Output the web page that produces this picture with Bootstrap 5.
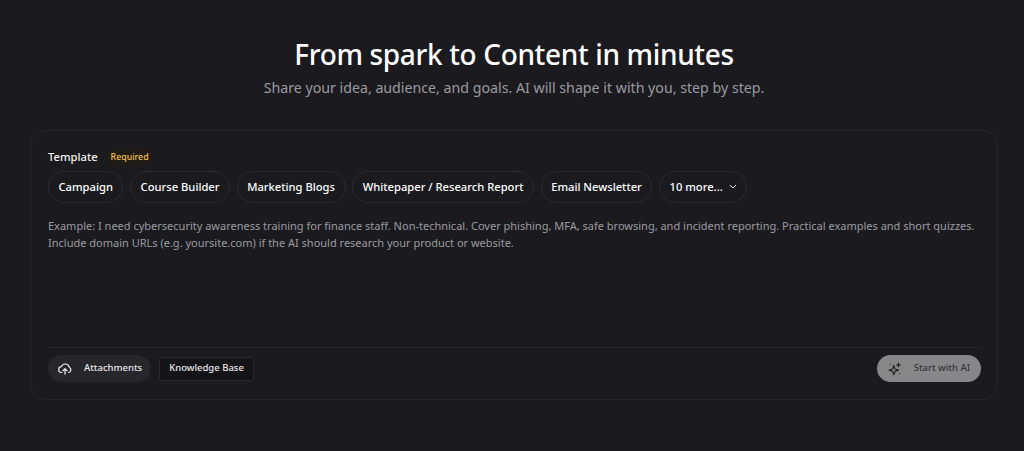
<!DOCTYPE html>
<html lang="en">
<head>
    <meta charset="UTF-8">
    <title>From spark to Content</title>
    <link href="https://cdn.jsdelivr.net/npm/bootstrap@5.3.3/dist/css/bootstrap.min.css" rel="stylesheet">
    <script src="https://cdn.jsdelivr.net/npm/bootstrap@5.3.3/dist/js/bootstrap.bundle.min.js"></script>
    <style>
        body {
            background: #1a1a1f;
            font-family: "Noto Sans", sans-serif;
            height: 451px;
            overflow: hidden;
        }

        .page-wrap {
            padding: 36px 26px 0 30px;
        }

        .hero-title {
            font-size: 28px;
            line-height: 36px;
            font-weight: 500;
            letter-spacing: -.35px;
            color: #fff;
            margin: 0 0 4px;
        }

        .hero-sub {
            font-size: 14.2px;
            line-height: 24px;
            color: #9a9aa0;
            margin: 0 0 30px;
        }

        .prompt-box {
            height: 270px;
            border: 1px solid #26262b;
            border-radius: 16px;
            padding: 17px 16px 17px 17px;
        }

        .field-label {
            font-size: 11.2px;
            line-height: 18px;
            font-weight: 500;
            color: #f2f2f2;
        }

        .required-tag {
            font-size: 8.8px;
            line-height: 14px;
            font-weight: 500;
            color: #f0c050;
            background: #211b16;
            border-radius: 8px;
            padding: 1px 4px;
            margin-left: 9px;
        }

        .chip-row {
            margin-top: 5px;
            gap: 6.7px;
        }

        .chip-btn {
            height: 32px;
            border: 1px solid #2a2a2f;
            border-radius: 16px;
            padding: 0 9.5px;
            font-size: 11.2px;
            font-weight: 500;
            color: #fff;
            background: transparent;
        }

        .chip-more {
            gap: 6px;
        }

        .prompt-text {
            font-size: 11px;
            line-height: 17px;
            color: #9a9aa0;
            margin: 14px 0 0;
            height: 130px;
        }

        .tool-bar {
            border-top: 1px solid #26262b;
            padding-top: 7px;
        }

        .attach-btn {
            height: 27px;
            border: 0;
            border-radius: 14px;
            background: #26262b;
            color: #e8e8e8;
            font-size: 9.5px;
            font-weight: 500;
            padding: 0 9px 0 10px;
        }

        .kb-btn {
            height: 24px;
            border: 1px solid #2a2a2f;
            border-radius: 2px;
            background: #141418;
            color: #e8e8e8;
            font-size: 9.5px;
            font-weight: 500;
            padding: 0 9px;
        }

        .start-btn {
            height: 27px;
            border: 0;
            border-radius: 14px;
            background: #87878a;
            color: #333336;
            font-size: 9.5px;
            font-weight: 500;
            padding: 0 11px;
        }
    </style>
</head>
<body>

<div class="page-wrap">
    <div class="text-center">
        <h1 class="hero-title">From spark to Content in minutes</h1>
        <p class="hero-sub">Share your idea, audience, and goals. AI will shape it with you, step by step.</p>
    </div>

    <div class="prompt-box">
        <div class="d-flex align-items-center">
            <span class="field-label">Template</span>
            <span class="required-tag">Required</span>
        </div>
        <div class="chip-row d-flex">
            <button type="button" class="chip-btn">Campaign</button>
            <button type="button" class="chip-btn">Course Builder</button>
            <button type="button" class="chip-btn">Marketing Blogs</button>
            <button type="button" class="chip-btn">Whitepaper / Research Report</button>
            <button type="button" class="chip-btn">Email Newsletter</button>
            <button type="button" class="chip-btn chip-more d-flex align-items-center">10 more...
                <svg width="8" height="8" viewBox="0 0 8 8" fill="none" stroke="#e0e0e0" stroke-width="1"><path d="M1 2 4 5 7 2"/></svg>
            </button>
        </div>
        <p class="prompt-text">Example: I need cybersecurity awareness training for finance staff. Non-technical. Cover phishing, MFA, safe browsing, and incident reporting. Practical examples and short quizzes. Include domain URLs (e.g. yoursite.com) if the AI should research your product or website.</p>
        <div class="tool-bar d-flex align-items-center justify-content-between">
            <div class="d-flex align-items-center gap-2">
                <button type="button" class="attach-btn d-flex align-items-center">
                    <svg class="me-2" width="14" height="14" viewBox="0 0 24 24" fill="none" stroke="#f0f0f0" stroke-width="2" stroke-linecap="round" stroke-linejoin="round"><path d="M6.5 18A5 5 0 0 1 6 8a7 7 0 0 1 13.5 1.5A4.5 4.5 0 0 1 18 18"/><path d="M12 21v-9M8.5 15 12 11.5 15.5 15"/></svg>
                    <span class="ms-1">Attachments</span>
                </button>
                <button type="button" class="kb-btn">Knowledge Base</button>
            </div>
            <button type="button" class="start-btn d-flex align-items-center">
                <svg class="me-2" width="14" height="14" viewBox="0 0 24 24" fill="none" stroke="#222225" stroke-width="2" stroke-linejoin="round" stroke-linecap="round"><path d="M10 6 12 12 18 14 12 16 10 22 8 16 2 14 8 12Z"/><path d="M18 2v6M15 5h6M4 4v.01M20 20v.01"/></svg>
                <span class="ms-1">Start with AI</span>
            </button>
        </div>
    </div>
</div>

</body>
</html>
